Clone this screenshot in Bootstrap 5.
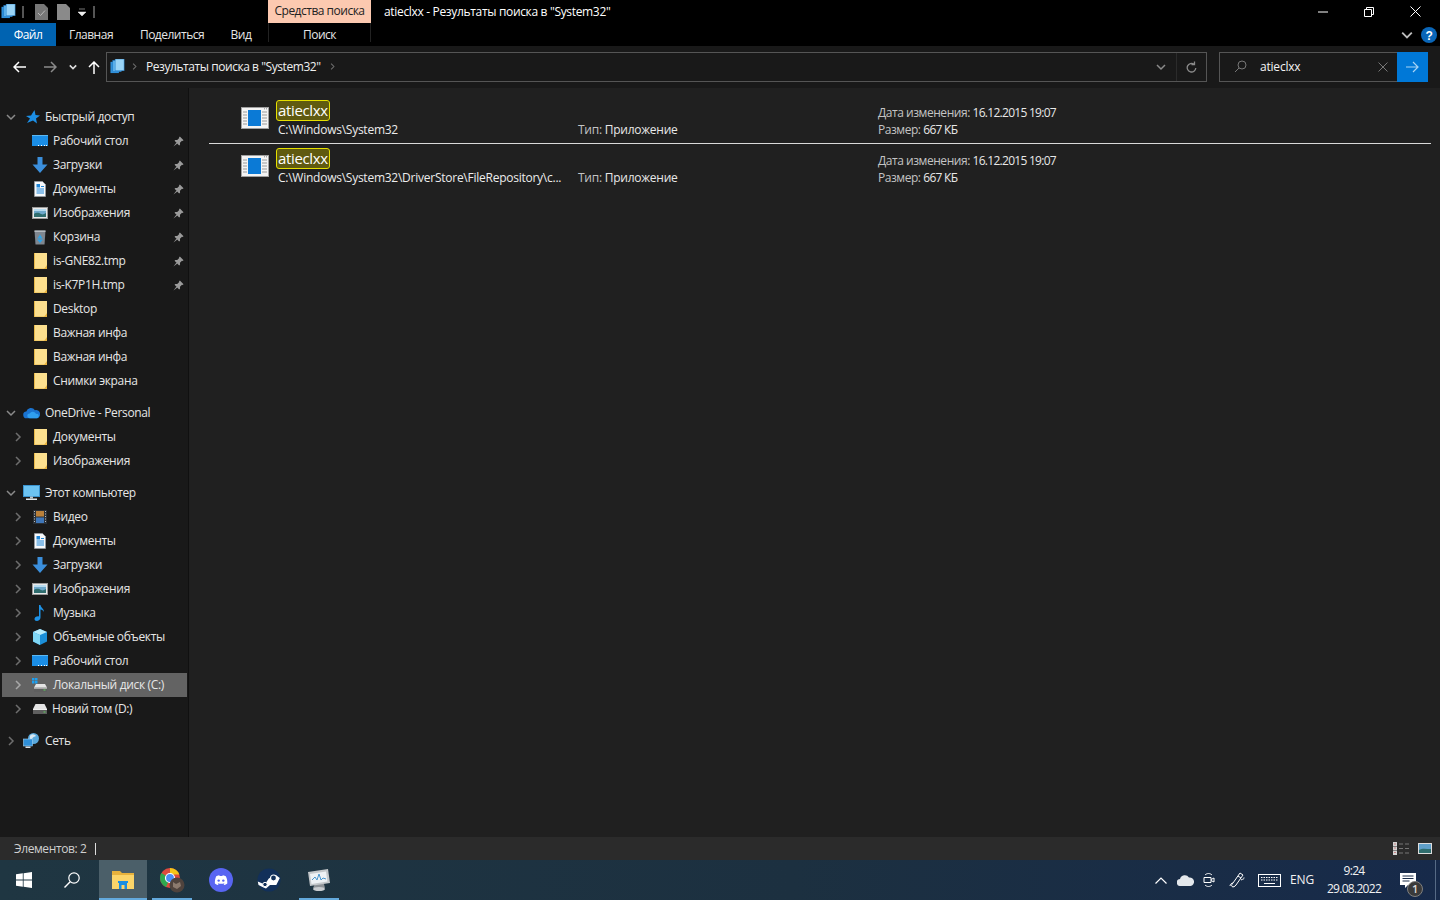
<!DOCTYPE html>
<html lang="ru">
<head>
    <meta charset="UTF-8">
    <meta name="viewport" content="width=device-width, initial-scale=1.0">
    <title>Результаты поиска</title>
    <link href="https://cdn.jsdelivr.net/npm/bootstrap@5.3.0/dist/css/bootstrap.min.css" rel="stylesheet">
    <style>
        html, body { height: 100%; }
        body { background: #202020; color: #e8e8e8; font-family: "Open Sans", "Noto Sans", sans-serif; font-size: 12px; line-height: 16px; overflow: hidden; letter-spacing: -.2px; }
        svg { display: block; flex: none; }
        .shell { width: 1440px; height: 900px; }
        .sp-6 { margin-left: 6px; }
        .sp-7 { margin-left: 7px; }
        .sp-8 { margin-left: 8px; }
        .sp-9 { margin-left: 9px; }
        .sp-11 { margin-left: 11px; }
        .sp-12 { margin-left: 12px; }
        .sp-18 { margin-left: 18px; }
        .title-row { height: 23px; background: #000; }
        .qat { width: 268px; padding-left: 1px; }
        .qat-sep { width: 2px; height: 12px; background: #555; }
        .tool-tab { width: 103px; height: 23px; background: #fcc9b0; color: #222; text-align: center; line-height: 21px; letter-spacing: -.5px; }
        .win-title { padding-left: 13px; color: #fff; letter-spacing: -.33px; }
        .win-btn { width: 46px; height: 23px; }
        .win-btns { padding-right: 2px; }
        .tab-row { height: 23px; background: #000; }
        .tab-item { height: 23px; line-height: 24px; text-align: center; color: #e6e6e6; letter-spacing: -.5px; }
        .tab-file { width: 56px; background: #0063b1; color: #fff; }
        .tab-main { width: 70px; }
        .tab-share { width: 92px; }
        .tab-view { width: 46px; }
        .tab-search { width: 103px; margin-left: 4px; border-left: 1px solid #222; border-right: 1px solid #222; height: 19px; line-height: 23px; align-self: flex-start; }
        .tab-tools { margin-right: 3px; }
        .addr-row { height: 42px; background: #191919; }
        .nav-btns { width: 106px; padding-left: 13px; }
        .addr-box { width: 1101px; height: 30px; margin-top: -1px; border: 1px solid #555; padding-left: 3px; color: #f0f0f0; letter-spacing: -.44px; }
        .addr-crumb { color: #6e6e6e; }
        .addr-end { width: 30px; height: 28px; }
        .addr-refresh { border-left: 1px solid #2b2b2b; }
        .search-box { width: 209px; height: 30px; margin-left: 12px; margin-top: -1px; border: 1px solid #555; }
        .search-lens { margin-left: 14px; }
        .search-text { margin-left: 13px; color: #f4f4f4; }
        .search-clear { margin-right: 10px; }
        .search-go { width: 31px; height: 30px; margin: -1px; background: #0078d7; }
        .body-row { height: 749px; }
        .side-nav { width: 189px; background: #191919; padding-top: 17px; border-right: 1px solid #101010; margin-right: 1px; }
        .tree-item { height: 24px; color: #e6e6e6; letter-spacing: -.34px; }
        .tree-gap { margin-top: 8px; }
        .tree-sel { background: #636363; width: 185px; margin-left: 2px; }
        .tree-arrow { width: 22px; display: flex; justify-content: center; color: #6e6e6e; }
        .tree-sub .tree-arrow { width: 32px; padding-left: 4px; }
        .tree-sel.tree-sub .tree-arrow { width: 30px; padding-left: 2px; color: #a8a8a8; }
        .tree-open { color: #8a8a8a; }
        .tree-star { margin-left: 4px; }
        .tree-root-icon { margin-left: 1px; }
        .tree-text { margin-left: 5px; white-space: nowrap; }
        .tree-pin { margin-left: auto; margin-right: 4px; }
        .results { padding: 9px 9px 0 19px; }
        .hit-row { height: 48px; }
        .hit-row + .hit-row { border-top: 1px solid #d9d9d9; height: 50px; margin-top: -2px; padding-top: 1px; }
        .hit-thumb { width: 67px; padding-left: 32px; padding-top: 10px; }
        .hit-main { width: 302px; padding-top: 3px; }
        .hit-name { display: inline-block; height: 21px; padding: 0 1px; background: #605a10; border: 1px solid #e5e000; border-radius: 3px; font-size: 15px; line-height: 19px; color: #fff; letter-spacing: -.35px; }
        .hit-path { padding-left: 2px; margin-top: 1px; color: #ececec; white-space: nowrap; letter-spacing: -.25px; }
        .hit-type { width: 300px; padding-top: 25px; letter-spacing: -.25px; }
        .hit-meta { padding-top: 8px; letter-spacing: -.45px; }
        .meta-key { color: #c4c4c4; }
        .meta-num { letter-spacing: -.72px; }
        .hit-meta > div + div { margin-top: 1px; }
        .status-row { height: 23px; background: #2b2b2b; padding-left: 14px; color: #d0d0d0; letter-spacing: -.4px; }
        .status-sep { width: 1px; height: 12px; background: #ddd; margin-left: 9px; }
        .status-end { margin-right: 8px; }
        .task-row { height: 40px; background: linear-gradient(90deg, #1f3642 0%, #1c3040 55%, #172a4a 100%); color: #f2f2f2; }
        .task-cell { width: 48px; height: 40px; display: flex; align-items: center; justify-content: center; position: relative; }
        .task-active { background: #4b5f69; margin-left: 3px; }
        .task-next { margin-left: 1px; }
        .task-far { margin-left: 2px; }
        .task-mark::after { content: ""; position: absolute; left: 4px; right: 4px; bottom: 0; height: 2px; background: #63a9dc; }
        .task-active::after { left: 0; right: 0; }
        .tray-slot { width: 24px; height: 40px; display: flex; align-items: center; justify-content: center; }
        .tray-wide { width: 32px; }
        .tray-lang { width: 30px; margin-left: 2px; text-align: center; }
        .clock-box { width: 74px; text-align: center; line-height: 18px; letter-spacing: -.7px; }
        .notify-box { width: 34px; margin-right: 10px; position: relative; }
        .notify-num { position: absolute; left: 16px; top: 8px; width: 16px; height: 16px; border-radius: 50%; background: #3a3a3a; border: 1px solid #808080; color: #ddd; font-size: 11px; line-height: 14px; text-align: center; font-weight: 600; }
        .desk-edge { width: 5px; height: 40px; border-left: 1px solid #566a85; }
    </style>
</head>
<body>
<svg width="0" height="0" class="position-absolute">
    <defs>
        <symbol id="i-stack" viewBox="0 0 16 16">
            <rect x="0.5" y="3" width="9" height="12" fill="#2f8fd8"/>
            <rect x="3" y="1.5" width="9" height="12" fill="#62b4ec" stroke="#1c78c4" stroke-width=".6"/>
            <rect x="5.5" y="0" width="9.5" height="12.5" fill="#9ad4f6" stroke="#2c86cf" stroke-width=".6"/>
        </symbol>
        <symbol id="i-folder" viewBox="0 0 16 16">
            <path d="M2 0h13v16H2z" fill="#fcdf8e"/>
            <path d="M2 0h1v16H2z" fill="#e8b94a"/>
            <path d="M12 16l3-4v4z" fill="#e8b13c"/>
            <path d="M2 15.500h13V16H2z" fill="#e8b94a"/>
        </symbol>
        <symbol id="i-desk" viewBox="0 0 16 16">
            <rect x="0" y="2" width="16" height="11" fill="#1b8ee6"/>
            <rect x="0" y="2" width="16" height="1" fill="#5cb8f2"/>
            <path d="M6 12.500h1M9 12.500h1M12 12.500h1M14 12.500h1" stroke="#fff" stroke-width="1"/>
        </symbol>
        <symbol id="i-down" viewBox="0 0 16 16">
            <path d="M5.500 0h5v7.500H15.500L8 16 .5 7.500h5z" fill="#3b8fdc"/>
        </symbol>
        <symbol id="i-doc" viewBox="0 0 16 16">
            <path d="M2.500.5h8l3 3v12h-11z" fill="#f6f8fa" stroke="#9a9fa5" stroke-width=".7"/>
            <path d="M4.500 3h3.500v3.500H4.500z" fill="#1f86d8"/>
            <path d="M9 5.500h3M4.500 8h7.500M4.500 10h7.500M4.500 12h7.500" stroke="#1f86d8" stroke-width="1.100"/>
        </symbol>
        <symbol id="i-pics" viewBox="0 0 16 16">
            <rect x="0.5" y="2.5" width="15" height="11" fill="#e9e9e9" stroke="#9a9a9a"/>
            <rect x="2" y="4" width="12" height="8" fill="#6fa9cc"/>
            <path d="M2 9c3-2 5-1 7 0s3 0 5-1v4H2z" fill="#2f6d6e"/>
            <rect x="2" y="4" width="12" height="2" fill="#b7dbef"/>
        </symbol>
        <symbol id="i-bin" viewBox="0 0 16 16">
            <path d="M2.500 1.500h11l-1 14h-9z" fill="#7f8790"/>
            <path d="M2.500 1.500h11V3h-11z" fill="#b4babf"/>
            <path d="M8 5.500l2.500 4h-5zM5 10.500h6L8 14z" fill="#2fa4e8"/>
        </symbol>
        <symbol id="i-pin" viewBox="0 0 12 12">
            <path d="M7.500 0.500L11.500 4.500 10.500 5.500 9.800 5.200 7.600 7.400 7.700 9.500 6.700 10.300 1.700 5.300 2.500 4.300 4.600 4.400 6.800 2.200 6.500 1.500zM3.800 7.200L0.500 11.500 4.800 8.200z" fill="#9b9b9b"/>
        </symbol>
        <symbol id="i-right" viewBox="0 0 10 10">
            <path d="M3 1l4 4-4 4" fill="none" stroke="currentColor" stroke-width="1.500"/>
        </symbol>
        <symbol id="i-open" viewBox="0 0 10 10">
            <path d="M1 3l4 4 4-4" fill="none" stroke="currentColor" stroke-width="1.500"/>
        </symbol>
        <symbol id="i-cloud" viewBox="0 0 18 12">
            <path d="M4 11.500a3.500 3.500 0 0 1-.5-7A5 5 0 0 1 12.600 3 4 4 0 0 1 15 11.500z" fill="#1a73d0"/>
            <path d="M7 11.500a2.500 2.500 0 0 1 0-5 4 4 0 0 1 7 .5 2.300 2.300 0 0 1 1 4.500z" fill="#2f9ff0"/>
        </symbol>
        <symbol id="i-pc" viewBox="0 0 17 16">
            <rect x="0.500" y="0.500" width="16" height="11" fill="#6cc3f2" stroke="#3a94d0"/>
            <path d="M7 11.500h3v2H7z" fill="#b8c4cc"/>
            <path d="M3 13.500h11v1.500H3z" fill="#dfe6ea"/>
        </symbol>
        <symbol id="i-film" viewBox="0 0 16 16">
            <rect x="1" y="1" width="14" height="14" fill="#2b3036"/>
            <rect x="4" y="2" width="8" height="5.500" fill="#b9803a"/>
            <rect x="4" y="8.500" width="8" height="5.500" fill="#3f76b8"/>
            <path d="M2 2.500h1M2 5h1M2 7.500h1M2 10h1M2 12.500h1M13 2.500h1M13 5h1M13 7.500h1M13 10h1M13 12.500h1" stroke="#b9bec4" stroke-width="1"/>
        </symbol>
        <symbol id="i-music" viewBox="0 0 16 16">
            <path d="M7 0h1.500c.3 2.500 3.500 3.500 3.500 7-.8-1.500-2-2.300-3.500-2.600V12.500C8.500 14.500 6.500 16 4.800 16 3.300 16 2.500 15 2.500 14c0-1.700 2-3 4.500-2.600z" fill="#1d93e8"/>
        </symbol>
        <symbol id="i-cube" viewBox="0 0 16 16">
            <path d="M8 0l7 3v9.500L8 16l-7-3.500V3z" fill="#1c8fd8"/>
            <path d="M8 0l7 3-7 3-7-3z" fill="#b8ecfb"/>
            <path d="M1 3l7 3v10l-7-3.500z" fill="#7fd6f4"/>
        </symbol>
        <symbol id="i-drive" viewBox="0 0 14 10">
            <path d="M2.500 0h9L14 5H0z" fill="#e4e4e4"/>
            <path d="M0 5h14v5H0z" fill="#5f5f5f"/>
            <path d="M0 5h14v1H0z" fill="#f2f2f2"/>
            <path d="M10.500 7.500h2v1h-2z" fill="#5ed05e"/>
        </symbol>
        <symbol id="i-sysdrive" viewBox="0 0 16 16">
            <path d="M4 7h9l2 3.500H2z" fill="#e4e4e4"/>
            <path d="M2 10.500h13V15H2z" fill="#5f5f5f"/>
            <path d="M2 10.500h13v1H2z" fill="#f2f2f2"/>
            <path d="M11.500 12.500h2v1h-2z" fill="#5ed05e"/>
            <path d="M0 1h2.500v2.500H0zM3 1h2.500v2.500H3zM0 4h2.500v2.500H0zM3 4h2.500v2.500H3z" fill="#1ea0f0"/>
        </symbol>
        <symbol id="i-net" viewBox="0 0 16 16">
            <circle cx="10" cy="5.500" r="5.500" fill="#5aa9dc"/>
            <path d="M7 2c2-1.500 4.500-.5 5.500 1-1.500 1-2 .5-3 1.500s-1 2.500-2.500 2C6 6 6 3.500 7 2z" fill="#d8e8f2"/>
            <rect x="0" y="6" width="9" height="7" fill="#2f8fd8" stroke="#9fd0f0" stroke-width=".6"/>
            <path d="M2 13.500h5V15H2z" fill="#d9e2e8"/>
        </symbol>
        <symbol id="i-app" viewBox="0 0 28 22">
            <rect x="0.500" y="0.500" width="27" height="21" fill="#f4f4f4" stroke="#a0a0a0"/>
            <rect x="7" y="3" width="13" height="16" fill="#0b7ad6"/>
            <path d="M2 5h4M2 8h4M2 11h4M2 14h4M2 17h4M21 5h5M21 8h5M21 11h5M21 14h5M21 17h5" stroke="#9a9a9a" stroke-width="1"/>
            <path d="M23 1.800h1M25 1.800h1" stroke="#888" stroke-width="1"/>
        </symbol>
    </defs>
</svg>

<div class="shell d-flex flex-column">
    <div class="title-row d-flex align-items-center">
        <div class="qat d-flex align-items-center">
            <svg width="15" height="15"><use href="#i-stack"/></svg>
            <span class="qat-sep sp-6"></span>
            <svg class="sp-11" width="13" height="16" viewBox="0 0 13 16"><path d="M0 0h9l4 4v12H0z" fill="#777"/><path d="M3 9l2.500 2.500 4.500-5" fill="none" stroke="#bbb" stroke-width="1"/></svg>
            <svg class="sp-9" width="13" height="16" viewBox="0 0 13 16"><path d="M0 0h9l4 4v12H0z" fill="#8a8a8a"/></svg>
            <svg class="sp-8" width="8" height="8" viewBox="0 0 8 8"><path d="M1 1h6M0 4h8L4 8z" fill="#eee" stroke="#eee" stroke-width=".5"/></svg>
            <span class="qat-sep sp-7"></span>
        </div>
        <div class="tool-tab">Средства поиска</div>
        <div class="win-title flex-grow-1">atieclxx - Результаты поиска в "System32"</div>
        <div class="win-btns d-flex">
            <div class="win-btn d-flex align-items-center justify-content-center"><svg width="10" height="10" viewBox="0 0 10 10"><path d="M0 5h10" stroke="#fff"/></svg></div>
            <div class="win-btn d-flex align-items-center justify-content-center"><svg width="10" height="10" viewBox="0 0 10 10"><path d="M.5 2.500h7v7h-7zM2.500 2.500v-2h7v7h-2" fill="none" stroke="#fff"/></svg></div>
            <div class="win-btn d-flex align-items-center justify-content-center"><svg width="11" height="11" viewBox="0 0 11 11"><path d="M.5.500l10 10M10.500.500l-10 10" stroke="#fff"/></svg></div>
        </div>
    </div>
    <div class="tab-row d-flex align-items-center">
        <div class="tab-item tab-file">Файл</div>
        <div class="tab-item tab-main">Главная</div>
        <div class="tab-item tab-share">Поделиться</div>
        <div class="tab-item tab-view">Вид</div>
        <div class="tab-item tab-search">Поиск</div>
        <div class="tab-tools ms-auto d-flex align-items-center gap-2">
            <svg width="12" height="12" viewBox="0 0 10 10"><path d="M1 3l4 4 4-4" fill="none" stroke="#bdbdbd" stroke-width="1.500"/></svg>
            <svg width="16" height="16" viewBox="0 0 16 16"><circle cx="8" cy="8" r="8" fill="#0a66b8"/><text x="8" y="12.500" text-anchor="middle" fill="#fff" font-size="12" font-weight="700" font-family="Liberation Sans">?</text></svg>
        </div>
    </div>
    <div class="addr-row d-flex align-items-center">
        <div class="nav-btns d-flex align-items-center">
            <svg width="13" height="12" viewBox="0 0 13 12"><path d="M6 1L1 6l5 5M1 6h12" fill="none" stroke="#fff" stroke-width="1.500"/></svg>
            <svg class="sp-18" width="13" height="12" viewBox="0 0 13 12"><path d="M7 1l5 5-5 5M12 6H0" fill="none" stroke="#8a8a8a" stroke-width="1.500"/></svg>
            <svg class="sp-12" width="8" height="8" viewBox="0 0 10 10"><path d="M1 3l4 4 4-4" fill="none" stroke="#ddd" stroke-width="2"/></svg>
            <svg class="sp-11" width="12" height="13" viewBox="0 0 12 13"><path d="M1 6l5-5 5 5M6 1v12" fill="none" stroke="#fff" stroke-width="1.500"/></svg>
        </div>
        <div class="addr-box d-flex align-items-center">
            <svg width="15" height="15"><use href="#i-stack"/></svg>
            <svg class="sp-6 addr-crumb" width="7" height="7" viewBox="0 0 10 10"><use href="#i-right"/></svg>
            <span class="sp-8">Результаты поиска в "System32"</span>
            <svg class="sp-8 addr-crumb" width="7" height="7" viewBox="0 0 10 10"><use href="#i-right"/></svg>
            <div class="addr-end ms-auto d-flex align-items-center justify-content-center"><svg width="10" height="10" viewBox="0 0 10 10"><path d="M1 3l4 4 4-4" fill="none" stroke="#8a8a8a" stroke-width="1.500"/></svg></div>
            <div class="addr-end addr-refresh d-flex align-items-center justify-content-center"><svg width="11" height="12" viewBox="0 0 11 12"><path d="M8 3.200A4.300 4.300 0 1 0 9.800 7M8.500 .5v3H5.500" fill="none" stroke="#8a8a8a" stroke-width="1.300"/></svg></div>
        </div>
        <div class="search-box d-flex align-items-center">
            <svg class="search-lens" width="13" height="13" viewBox="0 0 13 13"><circle cx="8" cy="5" r="4" fill="none" stroke="#777"/><path d="M5 8l-4 4" stroke="#777"/></svg>
            <span class="search-text">atieclxx</span>
            <svg class="search-clear ms-auto" width="10" height="10" viewBox="0 0 10 10"><path d="M.5.500l9 9M9.500.500l-9 9" stroke="#777"/></svg>
            <div class="search-go d-flex align-items-center justify-content-center"><svg width="13" height="12" viewBox="0 0 13 12"><path d="M7 1l5 5-5 5M12 6H0" fill="none" stroke="#a8d4f5" stroke-width="1.200"/></svg></div>
        </div>
    </div>

    <div class="body-row d-flex">
        <nav class="side-nav">
            <div class="tree-item d-flex align-items-center"><span class="tree-arrow tree-open"><svg width="10" height="10"><use href="#i-open"/></svg></span><svg class="tree-star" width="14" height="14" viewBox="0 0 14 14"><path d="M8.500 0l1 5 4.500.500-4 3 1 5L7 10.500 1 13l3-4.500L0 6l5-.500z" fill="#1c8fe6"/></svg><span class="tree-text">Быстрый доступ</span></div>
            <div class="tree-item tree-sub d-flex align-items-center"><span class="tree-arrow"></span><svg width="16" height="16"><use href="#i-desk"/></svg><span class="tree-text">Рабочий стол</span><svg class="tree-pin" width="11" height="11"><use href="#i-pin"/></svg></div>
            <div class="tree-item tree-sub d-flex align-items-center"><span class="tree-arrow"></span><svg width="16" height="16"><use href="#i-down"/></svg><span class="tree-text">Загрузки</span><svg class="tree-pin" width="11" height="11"><use href="#i-pin"/></svg></div>
            <div class="tree-item tree-sub d-flex align-items-center"><span class="tree-arrow"></span><svg width="16" height="16"><use href="#i-doc"/></svg><span class="tree-text">Документы</span><svg class="tree-pin" width="11" height="11"><use href="#i-pin"/></svg></div>
            <div class="tree-item tree-sub d-flex align-items-center"><span class="tree-arrow"></span><svg width="16" height="16"><use href="#i-pics"/></svg><span class="tree-text">Изображения</span><svg class="tree-pin" width="11" height="11"><use href="#i-pin"/></svg></div>
            <div class="tree-item tree-sub d-flex align-items-center"><span class="tree-arrow"></span><svg width="16" height="16"><use href="#i-bin"/></svg><span class="tree-text">Корзина</span><svg class="tree-pin" width="11" height="11"><use href="#i-pin"/></svg></div>
            <div class="tree-item tree-sub d-flex align-items-center"><span class="tree-arrow"></span><svg width="16" height="16"><use href="#i-folder"/></svg><span class="tree-text">is-GNE82.tmp</span><svg class="tree-pin" width="11" height="11"><use href="#i-pin"/></svg></div>
            <div class="tree-item tree-sub d-flex align-items-center"><span class="tree-arrow"></span><svg width="16" height="16"><use href="#i-folder"/></svg><span class="tree-text">is-K7P1H.tmp</span><svg class="tree-pin" width="11" height="11"><use href="#i-pin"/></svg></div>
            <div class="tree-item tree-sub d-flex align-items-center"><span class="tree-arrow"></span><svg width="16" height="16"><use href="#i-folder"/></svg><span class="tree-text">Desktop</span></div>
            <div class="tree-item tree-sub d-flex align-items-center"><span class="tree-arrow"></span><svg width="16" height="16"><use href="#i-folder"/></svg><span class="tree-text">Важная инфа</span></div>
            <div class="tree-item tree-sub d-flex align-items-center"><span class="tree-arrow"></span><svg width="16" height="16"><use href="#i-folder"/></svg><span class="tree-text">Важная инфа</span></div>
            <div class="tree-item tree-sub d-flex align-items-center"><span class="tree-arrow"></span><svg width="16" height="16"><use href="#i-folder"/></svg><span class="tree-text">Снимки экрана</span></div>

            <div class="tree-item tree-gap d-flex align-items-center"><span class="tree-arrow tree-open"><svg width="10" height="10"><use href="#i-open"/></svg></span><svg class="tree-root-icon" width="17" height="12"><use href="#i-cloud"/></svg><span class="tree-text">OneDrive - Personal</span></div>
            <div class="tree-item tree-sub d-flex align-items-center"><span class="tree-arrow"><svg width="10" height="10"><use href="#i-right"/></svg></span><svg width="16" height="16"><use href="#i-folder"/></svg><span class="tree-text">Документы</span></div>
            <div class="tree-item tree-sub d-flex align-items-center"><span class="tree-arrow"><svg width="10" height="10"><use href="#i-right"/></svg></span><svg width="16" height="16"><use href="#i-folder"/></svg><span class="tree-text">Изображения</span></div>

            <div class="tree-item tree-gap d-flex align-items-center"><span class="tree-arrow tree-open"><svg width="10" height="10"><use href="#i-open"/></svg></span><svg class="tree-root-icon" width="17" height="16"><use href="#i-pc"/></svg><span class="tree-text">Этот компьютер</span></div>
            <div class="tree-item tree-sub d-flex align-items-center"><span class="tree-arrow"><svg width="10" height="10"><use href="#i-right"/></svg></span><svg width="16" height="16"><use href="#i-film"/></svg><span class="tree-text">Видео</span></div>
            <div class="tree-item tree-sub d-flex align-items-center"><span class="tree-arrow"><svg width="10" height="10"><use href="#i-right"/></svg></span><svg width="16" height="16"><use href="#i-doc"/></svg><span class="tree-text">Документы</span></div>
            <div class="tree-item tree-sub d-flex align-items-center"><span class="tree-arrow"><svg width="10" height="10"><use href="#i-right"/></svg></span><svg width="16" height="16"><use href="#i-down"/></svg><span class="tree-text">Загрузки</span></div>
            <div class="tree-item tree-sub d-flex align-items-center"><span class="tree-arrow"><svg width="10" height="10"><use href="#i-right"/></svg></span><svg width="16" height="16"><use href="#i-pics"/></svg><span class="tree-text">Изображения</span></div>
            <div class="tree-item tree-sub d-flex align-items-center"><span class="tree-arrow"><svg width="10" height="10"><use href="#i-right"/></svg></span><svg width="16" height="16"><use href="#i-music"/></svg><span class="tree-text">Музыка</span></div>
            <div class="tree-item tree-sub d-flex align-items-center"><span class="tree-arrow"><svg width="10" height="10"><use href="#i-right"/></svg></span><svg width="16" height="16"><use href="#i-cube"/></svg><span class="tree-text">Объемные объекты</span></div>
            <div class="tree-item tree-sub d-flex align-items-center"><span class="tree-arrow"><svg width="10" height="10"><use href="#i-right"/></svg></span><svg width="16" height="16"><use href="#i-desk"/></svg><span class="tree-text">Рабочий стол</span></div>
            <div class="tree-item tree-sub tree-sel d-flex align-items-center"><span class="tree-arrow"><svg width="10" height="10"><use href="#i-right"/></svg></span><svg width="16" height="16"><use href="#i-sysdrive"/></svg><span class="tree-text">Локальный диск (C:)</span></div>
            <div class="tree-item tree-sub d-flex align-items-center"><span class="tree-arrow"><svg width="10" height="10"><use href="#i-right"/></svg></span><svg class="tree-root-icon" width="14" height="10"><use href="#i-drive"/></svg><span class="tree-text">Новий том (D:)</span></div>

            <div class="tree-item tree-gap d-flex align-items-center"><span class="tree-arrow"><svg width="10" height="10"><use href="#i-right"/></svg></span><svg class="tree-root-icon" width="17" height="16"><use href="#i-net"/></svg><span class="tree-text">Сеть</span></div>
        </nav>

        <main class="results flex-grow-1">
            <div class="hit-row d-flex">
                <div class="hit-thumb"><svg width="28" height="22"><use href="#i-app"/></svg></div>
                <div class="hit-main"><span class="hit-name">atieclxx</span><div class="hit-path">C:\Windows\System32</div></div>
                <div class="hit-type"><span class="meta-key">Тип:</span> Приложение</div>
                <div class="hit-meta"><div><span class="meta-key">Дата изменения:</span> <span class="meta-num">16.12.2015 19:07</span></div><div><span class="meta-key">Размер:</span> <span class="meta-num">667 КБ</span></div></div>
            </div>
            <div class="hit-row d-flex">
                <div class="hit-thumb"><svg width="28" height="22"><use href="#i-app"/></svg></div>
                <div class="hit-main"><span class="hit-name">atieclxx</span><div class="hit-path">C:\Windows\System32\DriverStore\FileRepository\c...</div></div>
                <div class="hit-type"><span class="meta-key">Тип:</span> Приложение</div>
                <div class="hit-meta"><div><span class="meta-key">Дата изменения:</span> <span class="meta-num">16.12.2015 19:07</span></div><div><span class="meta-key">Размер:</span> <span class="meta-num">667 КБ</span></div></div>
            </div>
        </main>
    </div>

    <div class="status-row d-flex align-items-center">
        <span>Элементов: 2</span><span class="status-sep"></span>
        <svg class="ms-auto" width="17" height="13" viewBox="0 0 17 13"><path d="M0 0h4v4H0zM0 4.500h4V8H0zM0 8.500h4V13H0z" fill="#d4d4d4"/><path d="M1.500 2h1M1.500 6h1M1.500 10.500h1" stroke="#b33"/><path d="M6 2h4M12 2h4M6 6.500h4M12 6.500h4M6 11h4M12 11h4" stroke="#777"/></svg>
        <svg class="status-end sp-8" width="14" height="11" viewBox="0 0 14 11"><rect x=".5" y=".5" width="13" height="10" fill="#5f9fc9" stroke="#ddd"/><path d="M1 7c3-2 7-1 12-1v4H1z" fill="#2f6d6e"/></svg>
    </div>

    <div class="task-row d-flex align-items-center">
        <div class="task-cell"><svg width="16" height="16" viewBox="0 0 16 16"><path d="M0 2.300L6.800 1.300V7.600H0zM7.600 1.200L16 0V7.600H7.600zM0 8.400H6.800V14.700L0 13.700zM7.600 8.400H16V16L7.600 14.800z" fill="#fff"/></svg></div>
        <div class="task-cell"><svg width="16" height="16" viewBox="0 0 16 16"><circle cx="10" cy="6" r="5.200" fill="none" stroke="#fff" stroke-width="1.200"/><path d="M6.200 9.800L.5 15.500" stroke="#fff" stroke-width="1.400"/></svg></div>
        <div class="task-cell task-active task-mark"><svg width="22" height="18" viewBox="0 0 22 18"><path d="M0 0h8l2 2h12v3H0z" fill="#e8b23c"/><path d="M0 4h22v14H0z" fill="#fcd569"/><path d="M7 10h8v8h-2.500v-4h-3v4H7z" fill="#1a8ee0"/><path d="M6 10h10v2H6z" fill="#1a8ee0"/></svg></div>
        <div class="task-cell task-mark task-next"><svg width="26" height="26" viewBox="0 0 26 26"><circle cx="11" cy="11" r="10" fill="#dd4b3e"/><path d="M11 11L2.300 6A10 10 0 0 0 7 20z" fill="#2fa84f"/><path d="M11 1a10 10 0 0 1 9.300 6.500H11z" fill="#f5c518"/><circle cx="11" cy="11" r="4.500" fill="#4b8df5" stroke="#fff" stroke-width="1.200"/><circle cx="18" cy="18" r="7.500" fill="#4f433d"/><path d="M14 15l3 2 4-2 1 4-4 3-4-2z" fill="#8b7a6e"/></svg></div>
        <div class="task-cell task-next"><svg width="24" height="24" viewBox="0 0 24 24"><circle cx="12" cy="12" r="12" fill="#5865f2"/><path d="M7.200 8.300C9 7.400 10 7.300 10.300 7.300l.3.600h2.800l.3-.6c.3 0 1.300.1 3.100 1 1.200 2.300 1.700 4.800 1.500 7.200-1 .8-2 1.200-3 1.500l-.7-1.100.9-.5-.3-.2c-1.800.8-4.300.8-6.200 0l-.3.200.9.500-.7 1.100c-1-.3-2-.7-3-1.500-.2-2.500.3-5 1.300-7.200z" fill="#fff"/><circle cx="9.700" cy="12.600" r="1.200" fill="#5865f2"/><circle cx="14.300" cy="12.600" r="1.200" fill="#5865f2"/></svg></div>
        <div class="task-cell"><svg width="24" height="24" viewBox="0 0 24 24"><circle cx="12" cy="12" r="11.500" fill="#12305a"/><path d="M.8 13.500l7 3 4-6 7-3.500 4 3-3.500 7H13l-4 3.500-2.500-1L1.500 17z" fill="#fff"/><circle cx="16.500" cy="10" r="3" fill="#12305a" stroke="#fff" stroke-width="1.200"/><circle cx="8" cy="16.500" r="2.200" fill="#12305a" stroke="#fff" stroke-width="1"/></svg></div>
        <div class="task-cell task-mark task-far"><svg width="24" height="24" viewBox="0 0 24 24"><path d="M8 16l-2 4h12l-1-4z" fill="#8d9297"/><ellipse cx="12" cy="21" rx="6" ry="2" fill="#c8ccd0"/><path d="M1 4l20-3 2 14-20 3z" fill="#c4c8cb"/><path d="M3 6l16-2.400 1.400 10L4.500 16z" fill="#eef2f5"/><path d="M5 12l3-3 2 3 2-6 2 6 2-2 3 1" fill="none" stroke="#4a97cf" stroke-width="1"/></svg></div>

        <div class="ms-auto d-flex align-items-center">
            <div class="tray-slot"><svg width="12" height="7" viewBox="0 0 12 7"><path d="M.5 6.500l5.500-5.500 5.500 5.500" fill="none" stroke="#fff" stroke-width="1.200"/></svg></div>
            <div class="tray-slot"><svg width="17" height="11" viewBox="0 0 17 11"><path d="M3.500 11a3.500 3.500 0 0 1-.5-7 5 5 0 0 1 9-1.500 4.200 4.200 0 0 1 1.500 8.500z" fill="#e4e8ec"/></svg></div>
            <div class="tray-slot"><svg width="12" height="16" viewBox="0 0 12 16"><path d="M2 3c2-2 5-2 7 0M2 13c2 2 5 2 7 0" fill="none" stroke="#fff"/><path d="M1 5.500h7v5H1zM8 7.500l3-1.500v4L8 8.500" fill="none" stroke="#fff"/></svg></div>
            <div class="tray-slot tray-wide"><svg width="16" height="16" viewBox="0 0 16 16"><path d="M11 1l3 2-7 10c-1 1.500-3 2.500-4 1.500S3 12 4 11zM9 4l3 2M1 14c0-2 2-3 3-3M12 8c2-1 3.500-1 3-2.500" fill="none" stroke="#fff" stroke-width="1"/></svg></div>
            <div class="tray-slot tray-wide"><svg width="23" height="13" viewBox="0 0 23 13"><rect x=".5" y=".5" width="22" height="12" fill="none" stroke="#fff"/><path d="M3 3.500h17M3 6h17" stroke="#fff" stroke-dasharray="1.500 1"/><path d="M6 9.500h11" stroke="#fff"/></svg></div>
            <div class="tray-lang">ENG</div>
            <div class="clock-box"><div>9:24</div><div>29.08.2022</div></div>
            <div class="notify-box d-flex justify-content-center"><svg width="16" height="15" viewBox="0 0 16 15"><path d="M0 0h16v12H8l-3 3v-3H0z" fill="#fff"/><path d="M2.500 3h11M2.500 5.500h11M2.500 8h7" stroke="#1a2c48"/></svg><span class="notify-num">1</span></div>
            <div class="desk-edge"></div>
        </div>
    </div>
</div>
</body>
</html>
